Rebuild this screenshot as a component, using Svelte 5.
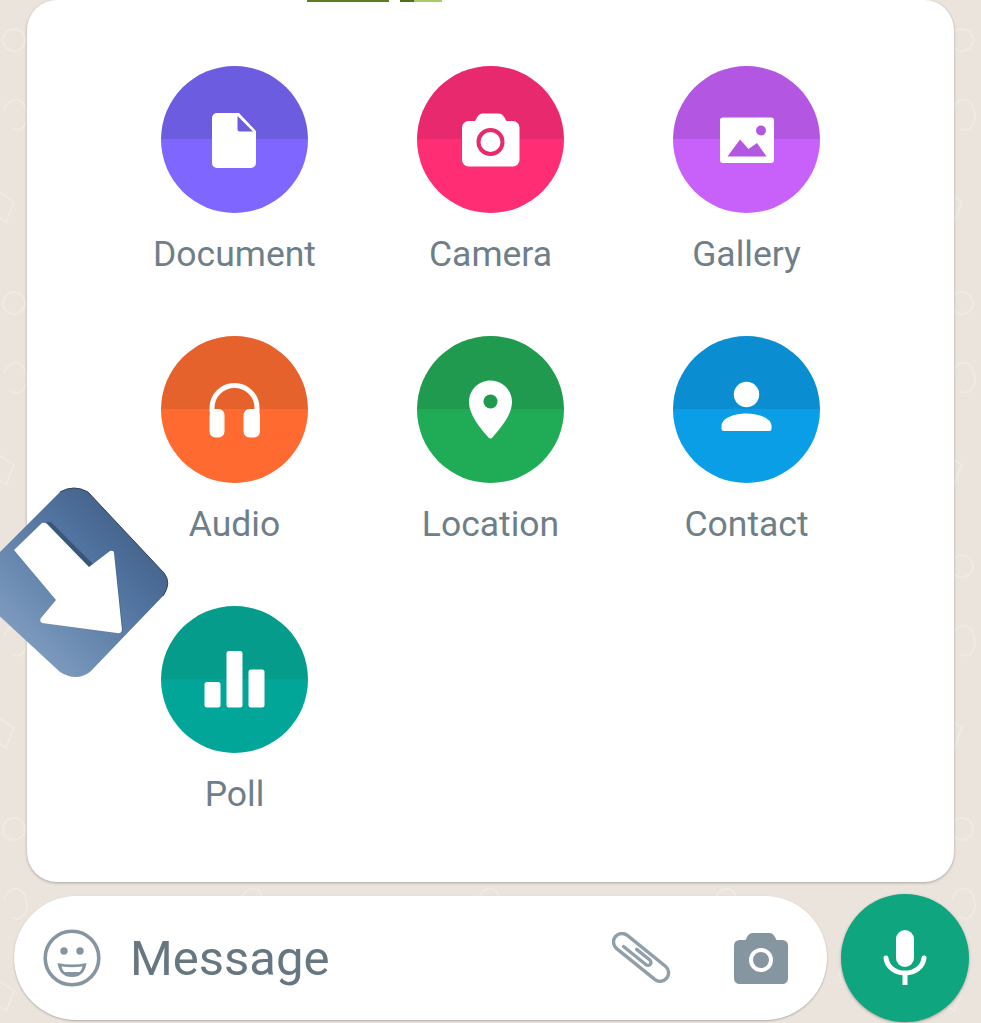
<script>
	const options = [
		{ label: 'Document', kind: 'doc' },
		{ label: 'Camera', kind: 'camera' },
		{ label: 'Gallery', kind: 'gallery' },
		{ label: 'Audio', kind: 'audio' },
		{ label: 'Location', kind: 'location' },
		{ label: 'Contact', kind: 'contact' },
		{ label: 'Poll', kind: 'poll' }
	];
</script>

<div class="page">
	<!-- faint chat wallpaper -->
	<svg class="wallpaper" width="981" height="1023" aria-hidden="true">
		<defs>
			<pattern id="doodle" width="237" height="263" patternUnits="userSpaceOnUse">
				<g fill="none" stroke="#f0ebe4" stroke-width="1.500">
					<circle cx="14" cy="40" r="11" />
					<path d="M4 110c6-14 18-14 22 0s-6 24-14 18" />
					<path d="M-4 190l18 12-8 20-14-10" />
					<path d="M90 60c10-8 26-4 30 8s-8 24-20 20" />
					<path d="M130 180c6-10 18-10 22 0s-10 20-11 20-17-10-11-20z" />
					<circle cx="196" cy="120" r="7" />
					<path d="M205 20c10 14 18 30 24 50" />
					<path d="M186 220c12-6 24-4 34 6" />
				</g>
			</pattern>
		</defs>
		<rect width="981" height="1023" fill="url(#doodle)" />
	</svg>

	<div class="panel">
		<div class="grid">
			{#each options as item}
				<div class="option">
					<div class="circle {item.kind}">
						<svg viewBox="0 0 147 147" width="147" height="147">
							{#if item.kind === 'doc'}
								<path class="white" d="M56 47h22l17 18v32a5 5 0 0 1-5 5H56a5 5 0 0 1-5-5V52a5 5 0 0 1 5-5z" />
								<path class="cut" d="M76.500 50v13a2.500 2.500 0 0 0 2.500 2.500h13z" />
							{:else if item.kind === 'camera'}
								<path class="white" d="M66 47.500h15c3 0 5 1.500 6.500 4l2 3.500h6.500a6.500 6.500 0 0 1 6.500 6.500v32.500a6.500 6.500 0 0 1-6.500 6.500H51.500a6.500 6.500 0 0 1-6.500-6.500V61.500a6.500 6.500 0 0 1 6.500-6.500H58l2-3.500c1.500-2.500 3-4 6-4z" />
								<circle class="ring" cx="73.500" cy="76" r="12" />
							{:else if item.kind === 'gallery'}
								<rect class="white" x="47" y="51.500" width="54" height="45.500" rx="3" />
								<circle class="cut" cx="88" cy="64.500" r="5" />
								<path class="cut" d="M54.500 90.500L67 73.500l8.500 9.500 8.500-6 9.500 13.500z" />
							{:else if item.kind === 'audio'}
								<path class="band" d="M51 76v-4a22.500 22.500 0 0 1 45 0v4" />
								<rect class="white" x="48.500" y="73" width="15" height="28.500" rx="6" />
								<rect class="white" x="82.500" y="73" width="16.500" height="28.500" rx="6" />
							{:else if item.kind === 'location'}
								<path class="white" d="M73.500 44.500c12 0 21.500 9.500 21.500 21.500 0 13-12 27-19.500 35.500a2.600 2.600 0 0 1-4 0C64 93 52 79 52 66c0-12 9.500-21.500 21.500-21.500z" />
								<circle class="cut" cx="73.500" cy="65.500" r="7" />
							{:else if item.kind === 'contact'}
								<circle class="white" cx="73.500" cy="58.500" r="12.700" />
								<path class="white" d="M48.500 90c0-8 13-12.500 25-12.500s25 4.500 25 12.500v2.500a2.500 2.500 0 0 1-2.500 2.500H51a2.500 2.500 0 0 1-2.500-2.500z" />
							{:else}
								<rect class="white" x="43.500" y="76" width="16" height="25.500" rx="2.500" />
								<rect class="white" x="65.500" y="45" width="16" height="56.500" rx="2.500" />
								<rect class="white" x="87.500" y="63.500" width="16" height="38" rx="2.500" />
							{/if}
						</svg>
					</div>
					<span class="label">{item.label}</span>
				</div>
			{/each}
		</div>
	</div>

	<div class="composer">
		<div class="input">
			<svg class="emoji" viewBox="0 0 58 58" width="58" height="58">
				<circle cx="29" cy="29" r="26.800" fill="none" stroke="#8696a0" stroke-width="3.600" />
				<circle cx="21" cy="22" r="3.700" fill="#8696a0" />
				<circle cx="37" cy="22" r="3.700" fill="#8696a0" />
				<path d="M14.500 34q14.500 3 29 0q-2 14-14.500 14t-14.500-14z" fill="#8696a0" />
				<path d="M18.500 37.500q10.500 1.500 21 0q-1 4-3 5.500h-15q-2-1.500-3-5.500z" fill="#fff" />
			</svg>
			<span class="placeholder">Message</span>
			<svg class="clip" viewBox="0 0 60 52" width="60" height="52">
				<g transform="translate(10 10) rotate(39)" fill="none" stroke="#919faa" stroke-width="3.400" stroke-linecap="round">
					<path d="M0 8.500A8.500 8.500 0 0 1 0-8.500H49A8.500 8.500 0 0 1 49 8.500H0" />
					<path d="M4 2.500H33a3 3 0 0 0 0-6H16" />
				</g>
			</svg>
			<svg class="cam" viewBox="0 0 54 51" width="54" height="51">
				<path d="M19 0h16c3 0 4.500 1.500 6 4l1.500 3h6a5.500 5.500 0 0 1 5.500 5.500v33a5.500 5.500 0 0 1-5.500 5.500h-43A5.500 5.500 0 0 1 0 45.500v-33A5.500 5.500 0 0 1 5.500 7h6L13 4c1.500-2.500 3-4 6-4z" fill="#8696a0" />
				<circle cx="27" cy="27" r="10" fill="none" stroke="#fff" stroke-width="4" />
			</svg>
		</div>
		<div class="mic">
			<svg viewBox="0 0 128 128" width="128" height="128">
				<rect x="55" y="36" width="18" height="37" rx="9" fill="#fff" />
				<path d="M45 64c1 9 9 15 19 15s18-6 19-15" fill="none" stroke="#fff" stroke-width="5" stroke-linecap="round" />
				<path d="M64 78v13" fill="none" stroke="#fff" stroke-width="5" />
			</svg>
		</div>
	</div>

	<!-- sticker pasted over the screenshot -->
	<svg class="sticker" viewBox="0 480 175 200" width="175" height="200" aria-hidden="true">
		<defs>
			<linearGradient id="plate" gradientUnits="userSpaceOnUse" x1="150" y1="510" x2="10" y2="650">
				<stop offset="0" stop-color="#3f5c82" />
				<stop offset="0.35" stop-color="#4f719d" />
				<stop offset="1" stop-color="#83a0c2" />
			</linearGradient>
		</defs>
		<path d="M60 492Q74 484 88 492L164 573Q172 583 163 596L90 672Q76 682 60 672L-18 600Q-25 585-18 570Z" fill="url(#plate)" />
		<path d="M60 492Q74 484 88 492L164 573Q172 583 163 596" fill="none" stroke="#2f3f5c" stroke-width="1" />
		<path d="M46 522l5 0 42 42-4 4z" fill="#3b5478" />
		<path d="M114 551l9 79-2 3-8-81z" fill="#4a6388" />
		<path d="M14 550L42 523Q45 522 47 524L89 567L110 551Q114 550 114 553L122 630Q121 634 117 633L42 623Q39 621 41 618L56 600Z" fill="#fff" />
	</svg>

	<div class="topmarks">
		<span class="mark wide"></span>
		<span class="mark dark"></span>
		<span class="mark pale"></span>
	</div>
</div>

<style>
	:global(body) {
		background: #ebe4dc;
	}
	.page {
		position: relative;
		width: 981px;
		height: 1023px;
		overflow: hidden;
		font-family: Roboto, 'Liberation Sans', sans-serif;
		background: #ebe4dc;
	}
	.wallpaper {
		position: absolute;
		left: 0;
		top: 0;
	}
	.panel {
		position: relative;
		margin-left: 27px;
		width: 927px;
		height: 882px;
		box-sizing: border-box;
		padding-top: 66px;
		background: #fff;
		border-radius: 30px;
		box-shadow: 0 1px 3px rgba(0, 0, 0, 0.28);
	}
	.grid {
		display: grid;
		grid-template-columns: repeat(3, 256px);
		justify-content: center;
		row-gap: 61px;
	}
	.option {
		display: flex;
		flex-direction: column;
		align-items: center;
		gap: 20px;
	}
	.circle {
		width: 147px;
		height: 147px;
		border-radius: 50%;
		background: linear-gradient(var(--dark) 50%, var(--light) 50%);
	}
	.circle svg {
		display: block;
	}
	.doc { --dark: #6c5ce0; --light: #7f66ff; }
	.camera { --dark: #e8296e; --light: #ff2e74; }
	.gallery { --dark: #b357e2; --light: #c861fa; }
	.audio { --dark: #e5622d; --light: #fe6a30; }
	.location { --dark: #1f9a4e; --light: #20ab56; }
	.contact { --dark: #0a8dd1; --light: #0a9ee7; }
	.poll { --dark: #059c8c; --light: #02a698; }
	.white {
		fill: #fff;
	}
	.cut {
		fill: var(--dark);
	}
	.ring {
		fill: #fff;
		stroke: var(--dark);
		stroke-width: 4;
	}
	.band {
		fill: none;
		stroke: #fff;
		stroke-width: 5;
	}
	.label {
		font-size: 35.500px;
		line-height: 42px;
		color: #6f7f88;
	}
	.composer {
		position: relative;
		display: flex;
		align-items: center;
		gap: 14px;
		margin-top: 12px;
		padding-left: 14px;
	}
	.input {
		display: flex;
		align-items: center;
		width: 813px;
		height: 124px;
		box-sizing: border-box;
		padding: 0 39px 0 29px;
		background: #fff;
		border-radius: 62px;
		box-shadow: 0 1px 2px rgba(0, 0, 0, 0.25);
	}
	.placeholder {
		flex: 1;
		margin-left: 29px;
		font-size: 49px;
		color: #667781;
	}
	.clip {
		margin-right: 62px;
	}
	.emoji,
	.clip,
	.cam {
		flex: none;
	}
	.mic {
		width: 128px;
		height: 128px;
		border-radius: 50%;
		background: #0fa67f;
		box-shadow: 0 1px 3px rgba(0, 0, 0, 0.3);
	}
	.mic svg {
		display: block;
	}
	.sticker {
		position: absolute;
		left: 0;
		top: 480px;
		overflow: visible;
	}
	.topmarks {
		position: absolute;
		left: 307px;
		top: 0;
		display: flex;
		height: 2px;
	}
	.mark {
		display: block;
	}
	.wide {
		width: 82px;
		background: #5c7d22;
		margin-right: 11px;
	}
	.dark {
		width: 14px;
		background: #4f6e24;
	}
	.pale {
		width: 28px;
		background: #a9cb66;
	}
</style>
